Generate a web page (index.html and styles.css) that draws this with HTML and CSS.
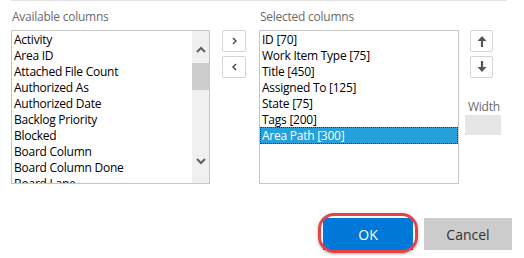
FILE: index.html
```html
<!DOCTYPE html>
<html lang="en">
<head>
    <meta charset="UTF-8">
    <title>Column options</title>
    <link rel="stylesheet" href="styles.css">
</head>
<body>
    <div class="rule"></div>

    <div class="columns">
        <!-- Available columns -->
        <div class="col">
            <div class="label">Available columns</div>
            <div class="listbox">
                <ul class="items">
                    <li>Activity</li>
                    <li>Area ID</li>
                    <li>Attached File Count</li>
                    <li>Authorized As</li>
                    <li>Authorized Date</li>
                    <li>Backlog Priority</li>
                    <li>Blocked</li>
                    <li>Board Column</li>
                    <li>Board Column Done</li>
                    <li>Board Lane</li>
                </ul>
                <div class="scrollbar">
                    <div class="arrow up">
                        <svg width="10" height="7" viewBox="0 0 10 7"><path d="M1 6 L5 2 L9 6" fill="none" stroke="#5f5f5f" stroke-width="2"/></svg>
                    </div>
                    <div class="thumb"></div>
                    <div class="track"></div>
                    <div class="arrow down">
                        <svg width="10" height="7" viewBox="0 0 10 7"><path d="M1 1 L5 5 L9 1" fill="none" stroke="#5f5f5f" stroke-width="2"/></svg>
                    </div>
                </div>
            </div>
        </div>

        <!-- Add / remove -->
        <div class="move-btns">
            <button class="sq">
                <svg width="5" height="8" viewBox="0 0 5 8"><path d="M1 1 L4 4 L1 7" fill="none" stroke="#444" stroke-width="1.4"/></svg>
            </button>
            <button class="sq">
                <svg width="5" height="8" viewBox="0 0 5 8"><path d="M4 1 L1 4 L4 7" fill="none" stroke="#444" stroke-width="1.4"/></svg>
            </button>
        </div>

        <!-- Selected columns -->
        <div class="col selected-col">
            <div class="label">Selected columns</div>
            <div class="listbox">
                <ul class="items">
                    <li>ID [70]</li>
                    <li>Work Item Type [75]</li>
                    <li>Title [450]</li>
                    <li>Assigned To [125]</li>
                    <li>State [75]</li>
                    <li>Tags [200]</li>
                    <li class="selected">Area Path [300]</li>
                </ul>
            </div>
        </div>

        <!-- Reorder + width -->
        <div class="side">
            <button class="sq narrow">
                <svg width="10" height="12" viewBox="0 0 10 12"><path d="M5 5 V12" stroke="#555" stroke-width="2.2"/><path d="M0.5 6 L5 1 L9.5 6 Z" fill="#555"/></svg>
            </button>
            <button class="sq narrow">
                <svg width="10" height="12" viewBox="0 0 10 12"><path d="M5 0 V7" stroke="#555" stroke-width="2.2"/><path d="M0.5 6 L5 11 L9.5 6 Z" fill="#555"/></svg>
            </button>
            <div class="label width-label">Width</div>
            <div class="width-input"></div>
        </div>
    </div>

    <div class="footer">
        <button class="btn ok">OK<span class="highlight"></span></button>
        <button class="btn cancel">Cancel</button>
    </div>
</body>
</html>
```

FILE: styles.css
```css
* {
    margin: 0;
    padding: 0;
    box-sizing: border-box;
}

body {
    width: 524px;
    height: 258px;
    overflow: hidden;
    background: #fff;
    font-family: "Open Sans", "Noto Sans", sans-serif;
    font-size: 12px;
    letter-spacing: -0.25px;
    color: #000;
}

.rule {
    margin-left: 11px;
    width: 496px;
    height: 1px;
    background: #e3e3e3;
}

.columns {
    display: flex;
    padding: 7px 0 0 11px;
}

.label {
    height: 16px;
    line-height: 16px;
    margin-bottom: 6px;
    padding: 1px 0 0 1px;
    color: #6b6b6b;
}

.col {
    width: 199px;
}

.selected-col {
    width: 200px;
    margin-left: 13px;
}

.listbox {
    display: flex;
    height: 154px;
    border: 1px solid #c6c6c6;
    overflow: hidden;
}

.items {
    flex: 1;
    list-style: none;
    overflow: hidden;
    padding-top: 1px;
}

.items li {
    height: 16px;
    line-height: 16px;
    padding-left: 2px;
    white-space: nowrap;
}

.items li.selected {
    margin-top: -1px;
    height: 17px;
    padding-top: 1px;
    background: #26a0da;
    color: #fff;
    outline: 1px dotted #333;
    outline-offset: -1px;
}

/* fake scrollbar */
.scrollbar {
    width: 17px;
    display: flex;
    flex-direction: column;
    background: #f0f0f0;
}

.arrow {
    height: 32px;
    display: flex;
    justify-content: center;
}

.arrow.up {
    align-items: flex-end;
    padding-bottom: 10px;
}

.arrow.down {
    height: 40px;
    align-items: flex-start;
    padding-top: 15px;
}

.thumb {
    height: 27px;
    background: #cdcdcd;
}

.track {
    flex: 1;
}

.move-btns {
    display: flex;
    flex-direction: column;
    gap: 4px;
    margin: 22px 0 0 12px;
}

.sq {
    width: 24px;
    height: 22px;
    display: flex;
    align-items: center;
    justify-content: center;
    background: #fff;
    border: 1px solid #d4d4d4;
    border-radius: 2px;
}

.sq.narrow {
    width: 23px;
}

.side {
    display: flex;
    flex-direction: column;
    align-items: flex-start;
    gap: 4px;
    margin: 22px 0 0 6px;
}

.side .sq {
    margin-left: 5px;
}

.width-label {
    margin: 17px 0 0 3px;
    padding: 0;
}

.width-input {
    width: 36px;
    height: 20px;
    margin-top: -4px;
    background: #e6e6e6;
}

.footer {
    display: flex;
    justify-content: flex-end;
    gap: 11px;
    padding: 34px 12px 0 0;
}

.btn {
    position: relative;
    height: 32px;
    border: none;
    font-family: "Open Sans", "Noto Sans", sans-serif;
    font-size: 14px;
}

.ok {
    width: 90px;
    background: #0078d7;
    color: #fff;
}

.cancel {
    width: 88px;
    background: #cccccc;
    color: #333;
}

/* red annotation ring drawn over the OK button */
.highlight {
    position: absolute;
    top: -5px;
    left: -5px;
    right: -5px;
    bottom: -3px;
    border: 3px solid #e4434a;
    border-radius: 16px;
    box-shadow: 0 1px 3px rgba(0, 0, 0, 0.35);
}
```
